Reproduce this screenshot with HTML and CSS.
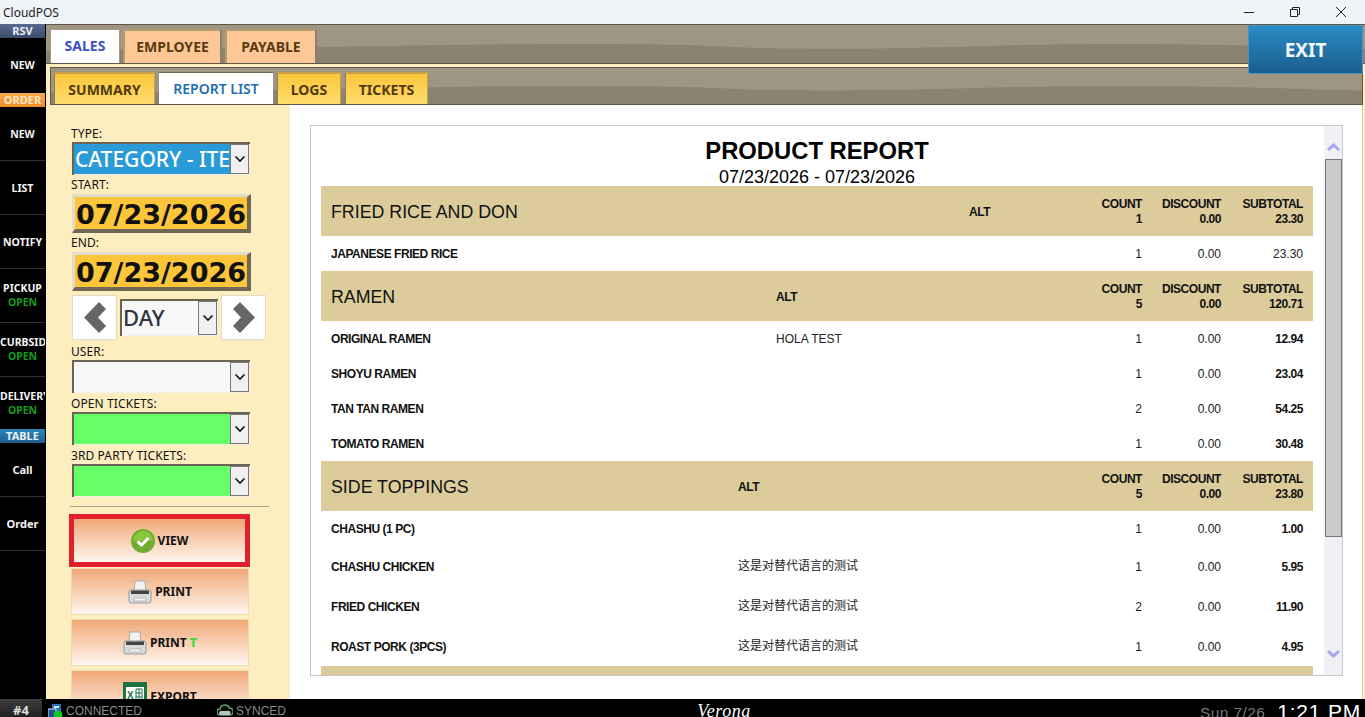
FILE: index.html
```html
<!DOCTYPE html>
<html>
<head>
    <title>CloudPOS</title>
    <link rel="stylesheet" href="styles.css">
</head>
<body>
    <div class="titlebar">
        <span class="app-name">CloudPOS</span>
        <div class="window-buttons">
            <svg width="12" height="12" viewBox="0 0 12 12"><path d="M1 6.500h10" stroke="#222" fill="none"/></svg>
            <svg width="12" height="12" viewBox="0 0 12 12"><path d="M1.500 3.500h7v7h-7zM3.500 3.500v-2h7v7h-2" stroke="#222" fill="none"/></svg>
            <svg width="12" height="12" viewBox="0 0 12 12"><path d="M1 1l10 10M11 1L1 11" stroke="#222" fill="none"/></svg>
        </div>
    </div>

    <div class="app">
        <div class="sidebar">
            <div class="side-head rsv">RSV</div>
            <div class="side-item first">NEW</div>
            <div class="side-head order">ORDER</div>
            <div class="side-item">NEW</div>
            <div class="side-item">LIST</div>
            <div class="side-item">NOTIFY</div>
            <div class="side-item">PICKUP<span class="open">OPEN</span></div>
            <div class="side-item">CURBSIDE<span class="open">OPEN</span></div>
            <div class="side-item last">DELIVERY<span class="open">OPEN</span></div>
            <div class="side-head table">TABLE</div>
            <div class="side-item plain">Call</div>
            <div class="side-item plain">Order</div>
        </div>

        <div class="main">
            <div class="band top-band">
                <svg class="wave" viewBox="0 0 1000 40" preserveAspectRatio="none"><path d="M0 27C120 27 280 20 405 20S500 25 590 25 720 20 815 20 950 24 1000 25V40H0z" fill="#8b8371"/></svg>
                <div class="tab active sales">SALES</div>
                <div class="tab peach">EMPLOYEE</div>
                <div class="tab peach">PAYABLE</div>
            </div>
            <div class="band sub-band">
                <svg class="wave" viewBox="0 0 1000 40" preserveAspectRatio="none"><path d="M0 27C120 27 280 20 405 20S500 25 590 25 720 20 815 20 950 24 1000 25V40H0z" fill="#8b8371"/></svg>
                <div class="tab yellow summary">SUMMARY</div>
                <div class="tab active reports">REPORT LIST</div>
                <div class="tab yellow logs">LOGS</div>
                <div class="tab yellow tickets">TICKETS</div>
            </div>

            <div class="content">
                <div class="filters">
                    <label class="first">TYPE:</label>
                    <div class="combo type-combo">
                        <div class="combo-value selected">CATEGORY - ITEM</div>
                        <div class="combo-arrow"><svg width="12" height="8" viewBox="0 0 12 8"><path d="M1.500 1.500L6 6l4.500-4.500" stroke="#111" stroke-width="1.600" fill="none"/></svg></div>
                    </div>
                    <label>START:</label>
                    <div class="date-box">07/23/2026</div>
                    <label>END:</label>
                    <div class="date-box">07/23/2026</div>
                    <div class="day-nav">
                        <div class="nav-btn"><svg width="22" height="31" viewBox="0 0 22 31"><polygon points="0,15.500 15,0 22,7 14,15.500 22,24 15,31" fill="#666"/></svg></div>
                        <div class="combo day-combo">
                            <div class="combo-value">DAY</div>
                            <div class="combo-arrow"><svg width="12" height="8" viewBox="0 0 12 8"><path d="M1.500 1.500L6 6l4.500-4.500" stroke="#111" stroke-width="1.600" fill="none"/></svg></div>
                        </div>
                        <div class="nav-btn"><svg width="22" height="31" viewBox="0 0 22 31"><polygon points="22,15.500 7,0 0,7 8,15.500 0,24 7,31" fill="#666"/></svg></div>
                    </div>
                    <label class="after-nav">USER:</label>
                    <div class="combo">
                        <div class="combo-value"></div>
                        <div class="combo-arrow"><svg width="12" height="8" viewBox="0 0 12 8"><path d="M1.500 1.500L6 6l4.500-4.500" stroke="#111" stroke-width="1.600" fill="none"/></svg></div>
                    </div>
                    <label class="after-combo">OPEN TICKETS:</label>
                    <div class="combo">
                        <div class="combo-value green"></div>
                        <div class="combo-arrow"><svg width="12" height="8" viewBox="0 0 12 8"><path d="M1.500 1.500L6 6l4.500-4.500" stroke="#111" stroke-width="1.600" fill="none"/></svg></div>
                    </div>
                    <label class="after-combo">3RD PARTY TICKETS:</label>
                    <div class="combo">
                        <div class="combo-value green"></div>
                        <div class="combo-arrow"><svg width="12" height="8" viewBox="0 0 12 8"><path d="M1.500 1.500L6 6l4.500-4.500" stroke="#111" stroke-width="1.600" fill="none"/></svg></div>
                    </div>
                    <div class="divider"></div>

                    <div class="action view">
                        <svg width="24" height="24" viewBox="0 0 24 24"><circle cx="12" cy="12" r="12" fill="#6fae2e"/><path d="M2 12a10 10 0 0 1 20 0z" fill="#8cc63f"/><path d="M6.500 12.500l4 3.500 7-7" stroke="#fff" stroke-width="3" fill="none"/></svg>
                        <span>VIEW</span>
                    </div>
                    <div class="action">
                        <svg width="24" height="24" viewBox="0 0 24 24"><path d="M7 1h10l1 10H6z" fill="#f2f2f2" stroke="#aaa"/><path d="M3 10h18a2 2 0 0 1 2 2v9a2 2 0 0 1-2 2H3a2 2 0 0 1-2-2v-9a2 2 0 0 1 2-2z" fill="#d8dadc" stroke="#999"/><path d="M3 10.500h18v3.500H3z" fill="#444"/><path d="M6 18h12v3H6z" fill="#f4f4f4" stroke="#bbb"/></svg>
                        <span>PRINT</span>
                    </div>
                    <div class="action">
                        <svg width="24" height="24" viewBox="0 0 24 24"><path d="M7 1h10l1 10H6z" fill="#f2f2f2" stroke="#aaa"/><path d="M3 10h18a2 2 0 0 1 2 2v9a2 2 0 0 1-2 2H3a2 2 0 0 1-2-2v-9a2 2 0 0 1 2-2z" fill="#d8dadc" stroke="#999"/><path d="M3 10.500h18v3.500H3z" fill="#444"/><path d="M6 18h12v3H6z" fill="#f4f4f4" stroke="#bbb"/></svg>
                        <span>PRINT <b class="green-t">T</b></span>
                    </div>
                    <div class="action export">
                        <svg width="24" height="24" viewBox="0 0 24 24"><path d="M0 0h24v24H0z" fill="#1f7244"/><path d="M3 5h18v16H3z" fill="#fff"/><path d="M13 7h6v12h-6zM13 11h6M13 15h6M16 7v12" stroke="#1f7244" fill="none"/><text x="4" y="17" font-size="10" font-family="Liberation Sans, sans-serif" font-weight="700" fill="#1f7244">X</text></svg>
                        <span>EXPORT</span>
                    </div>
                </div>

                <div class="report-area">
                    <div class="report-frame">
                        <div class="report">
                            <div class="report-title">PRODUCT REPORT</div>
                            <div class="report-dates">07/23/2026 - 07/23/2026</div>

                            <div class="group rice">
                                <div class="line head"><span class="cat">FRIED RICE AND DON</span><b>ALT</b><b class="num">COUNT<br>1</b><b class="num">DISCOUNT<br>0.00</b><b class="num">SUBTOTAL<br>23.30</b></div>
                                <div class="line"><b>JAPANESE FRIED RICE</b><span></span><span class="num">1</span><span class="num">0.00</span><span class="num">23.30</span></div>
                            </div>

                            <div class="group ramen">
                                <div class="line head"><span class="cat">RAMEN</span><b>ALT</b><b class="num">COUNT<br>5</b><b class="num">DISCOUNT<br>0.00</b><b class="num">SUBTOTAL<br>120.71</b></div>
                                <div class="line"><b>ORIGINAL RAMEN</b><span>HOLA TEST</span><span class="num">1</span><span class="num">0.00</span><b class="num">12.94</b></div>
                                <div class="line"><b>SHOYU RAMEN</b><span></span><span class="num">1</span><span class="num">0.00</span><b class="num">23.04</b></div>
                                <div class="line"><b>TAN TAN RAMEN</b><span></span><span class="num">2</span><span class="num">0.00</span><b class="num">54.25</b></div>
                                <div class="line"><b>TOMATO RAMEN</b><span></span><span class="num">1</span><span class="num">0.00</span><b class="num">30.48</b></div>
                            </div>

                            <div class="group sides">
                                <div class="line head"><span class="cat">SIDE TOPPINGS</span><b>ALT</b><b class="num">COUNT<br>5</b><b class="num">DISCOUNT<br>0.00</b><b class="num">SUBTOTAL<br>23.80</b></div>
                                <div class="line"><b>CHASHU (1 PC)</b><span></span><span class="num">1</span><span class="num">0.00</span><b class="num">1.00</b></div>
                                <div class="line tall"><b>CHASHU CHICKEN</b><span class="cjk">这是对替代语言的测试</span><span class="num">1</span><span class="num">0.00</span><b class="num">5.95</b></div>
                                <div class="line tall"><b>FRIED CHICKEN</b><span class="cjk">这是对替代语言的测试</span><span class="num">2</span><span class="num">0.00</span><b class="num">11.90</b></div>
                                <div class="line tall"><b>ROAST PORK (3PCS)</b><span class="cjk">这是对替代语言的测试</span><span class="num">1</span><span class="num">0.00</span><b class="num">4.95</b></div>
                            </div>

                            <div class="group"><div class="line head"></div></div>
                        </div>
                        <div class="scrollbar">
                            <svg width="17" height="12" viewBox="0 0 17 12"><path d="M3 9l5.500-5L14 9" stroke="#a5a5f0" stroke-width="3" fill="none"/></svg>
                            <div class="thumb"></div>
                            <svg class="down" width="17" height="12" viewBox="0 0 17 12"><path d="M3 3l5.500 5L14 3" stroke="#a5a5f0" stroke-width="3" fill="none"/></svg>
                        </div>
                    </div>
                </div>
            </div>
        </div>

        <div class="exit-btn">EXIT</div>
    </div>

    <div class="footer">
        <div class="station">#4</div>
        <div class="status connected">
            <svg width="15" height="15" viewBox="0 0 15 15"><path d="M4 0h9v9H4z" fill="#2a6fc0"/><path d="M6 2h5v2H6z" fill="#cfe3f7"/><path d="M0 5h8v9H0z" fill="#1d4f96" stroke="#cfe3f7"/><circle cx="10" cy="11" r="4.500" fill="#12c71e"/></svg>
            <span>CONNECTED</span>
        </div>
        <div class="status synced">
            <svg width="16" height="12" viewBox="0 0 16 12"><path d="M3 11a3 3 0 0 1 0-6 5 5 0 0 1 9.500-1 3.500 3.500 0 0 1 .5 7z" fill="#0f0f0f" stroke="#5c9a6a" stroke-width="1.500"/><path d="M3 11a2.500 2.500 0 0 1 .5-4h9a2.500 2.500 0 0 1 0 4z" fill="#b9c6bb"/></svg>
            <span>SYNCED</span>
        </div>
        <div class="store">Verona</div>
        <div class="clock">
            <span class="date">Sun 7/26</span>
            <span class="time">1:21 PM</span>
        </div>
    </div>
</body>
</html>
```

FILE: styles.css
```css
html, body {
    margin: 0;
    height: 717px;
    overflow: hidden;
}

body {
    font-family: "Noto Sans", "Open Sans", sans-serif;
    background: #000;
    display: flex;
    flex-direction: column;
}

.titlebar {
    height: 24px;
    flex: none;
    background: #eff4f9;
    display: flex;
    align-items: center;
    justify-content: space-between;
    font-size: 12px;
    color: #222;
    padding-left: 3px;
}

.window-buttons {
    display: flex;
    gap: 34px;
    padding-right: 18px;
}

.window-buttons svg {
    display: block;
}

.app {
    position: relative;
    height: 675px;
    flex: none;
    display: flex;
}

/* left black column */
.sidebar {
    width: 45px;
    flex: none;
    background: #000;
    color: #f4f4f4;
    font-size: 10.5px;
    font-weight: 700;
    overflow: hidden;
}

.side-head {
    height: 14px;
    line-height: 14px;
    text-align: center;
    font-size: 11px;
}

.side-head.rsv {
    background: linear-gradient(#56698f, #3d4c6d);
    color: #e8edf5;
}

.side-head.order {
    background: linear-gradient(#f9a94f, #f08b26);
    color: #ffe8c8;
}

.side-head.table {
    background: linear-gradient(#2c86bb, #1f5f8c);
    color: #e6f2fa;
}

.side-item {
    height: 54px;
    box-sizing: border-box;
    border-bottom: 1px solid #333;
    text-align: center;
    white-space: nowrap;
    overflow: hidden;
    padding-top: 20px;
    line-height: 14px;
}

.side-item.first {
    height: 55px;
    border-bottom: 0;
}

.side-item.last {
    height: 52px;
    border-bottom: 0;
}

.side-item.plain {
    font-size: 11px;
}

.side-item .open {
    display: block;
    color: #0f9d1c;
}

.side-item:has(.open) {
    padding-top: 12px;
}

.main {
    flex: 1;
    min-width: 0;
    margin-left: 1px;
    background: #fdeec0;
    display: flex;
    flex-direction: column;
    padding-right: 2px;
}

/* brown header bands behind the tabs */
.band {
    position: relative;
    display: flex;
    align-items: flex-end;
    background: #9e9583;
    overflow: hidden;
    box-sizing: border-box;
}

.wave {
    position: absolute;
    left: 0;
    top: 0;
    width: 100%;
    height: 100%;
}

.top-band {
    height: 40px;
    flex: none;
    border-top: 1px solid #5d5748;
    border-bottom: 1px solid #5d5748;
    padding-left: 4px;
    gap: 3px;
    margin-right: -2px;
}

.sub-band {
    height: 38px;
    flex: none;
    margin: 3px 0 0 4px;
    border: 1px solid #5d5748;
    padding-left: 3px;
    gap: 4px;
}

.tab {
    position: relative;
    box-sizing: border-box;
    font-size: 14px;
    font-weight: 700;
    text-align: center;
    height: 34px;
    line-height: 32px;
}

.tab.sales {
    width: 70px;
    color: #3f51c4;
    background: #fff;
    border: 1px solid #a59b88;
    border-bottom: 0;
}

.tab.peach {
    background: #fec896;
    color: #5a3a12;
    border-left: 2px solid #b39a70;
    border-top: 2px solid #b39a70;
    border-right: 2px solid #8d7f66;
    width: 99px;
}

.tab.peach + .tab.peach {
    width: 92px;
}

.sub-band .tab {
    height: 32px;
    line-height: 31px;
    width: 101px;
}

.tab.yellow {
    background: linear-gradient(#fcc63c, #fedc6c);
    color: #53390f;
    border-top: 2px solid #c9a24a;
    border-left: 1px solid #8d7f66;
    border-right: 1px solid #c9a24a;
}

.tab.reports {
    background: #fff;
    color: #1f6fb0;
    width: 114px;
    font-weight: 600;
    border-top: 1px solid #6f6654;
}

.tab.logs {
    width: 64px;
}

.tab.tickets {
    width: 83px;
}

.content {
    flex: 1;
    min-height: 0;
    display: flex;
    margin-left: 4px;
}

/* report filters on the left */
.filters {
    width: 240px;
    flex: none;
    box-sizing: border-box;
    padding: 22px 0 0 22px;
    border-right: 1px solid #efe6cc;
    overflow: hidden;
    display: flex;
    flex-direction: column;
    align-items: flex-start;
}

.filters label {
    display: block;
    flex: none;
    height: 15px;
    line-height: 14px;
    font-size: 12px;
    letter-spacing: 0.1px;
    margin: 3px 0 1px -1px;
    color: #111;
}

.filters label.first {
    margin: 0 0 0 -1px;
}

.filters label.after-nav {
    margin: 5px 0 0 -1px;
}

.filters label.after-combo {
    margin: 4px 0 0 -1px;
}

.combo {
    width: 178px;
    height: 33px;
    flex: none;
    box-sizing: border-box;
    display: flex;
    border-top: 2px solid #6b6455;
    border-left: 2px solid #6b6455;
    background: #f3f0ea;
    padding: 0 1px 1px 0;
}

.combo-value {
    flex: 1;
    min-width: 0;
    background: #f7f7f7;
    font-size: 21px;
    line-height: 30px;
    white-space: nowrap;
    overflow: hidden;
    color: #333;
    padding-left: 1px;
}

.combo-value.selected {
    background: #2a9bd8;
    color: #fff;
    font-weight: 500;
}

.combo-value.green {
    background: #66ff66;
}

.combo-arrow {
    width: 17px;
    flex: none;
    background: #f0f0f0;
    border: 1px solid #777;
    display: flex;
    align-items: center;
    justify-content: center;
}

.date-box {
    width: 179px;
    height: 39px;
    flex: none;
    box-sizing: border-box;
    background: #fcc53a;
    border-top: 3px solid #e3dcc8;
    border-left: 3px solid #e3dcc8;
    border-right: 4px solid #6f6654;
    border-bottom: 4px solid #6f6654;
    font-family: "DejaVu Sans", sans-serif;
    font-weight: 700;
    font-size: 27px;
    line-height: 35px;
    color: #111;
    white-space: nowrap;
    padding-left: 1px;
    overflow: hidden;
}

.day-nav {
    display: flex;
    flex: none;
    align-items: center;
    gap: 3px;
    margin-top: 4px;
}

.nav-btn {
    width: 45px;
    height: 45px;
    box-sizing: border-box;
    background: #fff;
    border: 1px solid #e3dcc8;
    display: flex;
    align-items: center;
    justify-content: center;
}

.day-combo {
    width: 98px;
    height: 37px;
}

.day-combo .combo-value {
    line-height: 32px;
    font-size: 22px;
    font-weight: 500;
    color: #2f3440;
}

.divider {
    width: 199px;
    height: 1px;
    flex: none;
    background: #a8a290;
    margin: 9px 0 0 -2px;
}

.action {
    width: 178px;
    height: 47px;
    flex: none;
    box-sizing: border-box;
    background: linear-gradient(#f0a877, #fff6ef);
    border: 1px solid #ecdcb8;
    margin: 4px 0 0 -1px;
    display: flex;
    align-items: center;
    justify-content: center;
    gap: 3px;
    font-size: 12px;
    font-weight: 700;
    color: #111;
}

.action.view {
    position: relative;
    width: 181px;
    height: 53px;
    border: 5px solid #e0202a;
    margin: 7px 0 -3px -3px;
}

.green-t {
    color: #3ede3e;
}

.action.export {
    align-items: flex-start;
    padding-top: 11px;
}

.action.export span {
    padding-top: 6px;
}

/* report area */
.report-area {
    flex: 1;
    min-width: 0;
    background: #fff;
    padding: 20px 19px 23px 20px;
    border-right: 1px solid #d8cfae;
}

.report-frame {
    height: 100%;
    box-sizing: border-box;
    border: 1px solid #c8c8c8;
    display: flex;
    justify-content: space-between;
    overflow: hidden;
}

.report {
    width: 992px;
    margin-left: 10px;
    flex: none;
    font-family: "Liberation Sans", Arial, sans-serif;
    font-size: 12px;
    color: #222;
}

.report-title {
    font-size: 23.800px;
    font-weight: 700;
    color: #000;
    text-align: center;
    padding-top: 11px;
    line-height: 28px;
}

.report-dates {
    font-size: 18px;
    text-align: center;
    color: #000;
    line-height: 24px;
    height: 21px;
}

.group {
    --name-col: 400px;
}

.group.rice {
    --name-col: 638px;
}

.group.ramen {
    --name-col: 445px;
}

.group.sides {
    --name-col: 407px;
}

.line {
    display: grid;
    grid-template-columns: var(--name-col) 1fr 60px 79px 82px;
    align-items: center;
    height: 35px;
    box-sizing: border-box;
    padding: 0 10px;
}

.line.tall {
    height: 40px;
    padding-top: 2px;
}

.line.head {
    height: 50px;
    padding-top: 2px;
    background: #dccc9c;
    line-height: 15px;
}

.line b {
    color: #111;
    letter-spacing: -0.45px;
}

.cat {
    font-size: 17.800px;
    color: #111;
}

.num {
    text-align: right;
}

.cjk {
    font-family: "Noto Sans CJK SC", sans-serif;
    line-height: 15px;
    margin-bottom: 6px;
}

.scrollbar {
    position: relative;
    width: 17px;
    flex: none;
    background: #f0f0f5;
    border-left: 1px solid #f0f0f5;
}

.scrollbar svg {
    position: absolute;
    left: 0;
    top: 15px;
}

.scrollbar svg.down {
    top: auto;
    bottom: 15px;
}

.thumb {
    position: absolute;
    top: 33px;
    left: 0;
    width: 17px;
    height: 378px;
    box-sizing: border-box;
    background: #cbcbcb;
    border: 1px solid #777;
}

.exit-btn {
    position: absolute;
    top: 1px;
    right: 2px;
    width: 115px;
    height: 49px;
    box-sizing: border-box;
    border: 1px solid #4a94c4;
    background: linear-gradient(#2b8bc4, #1c5d8e);
    color: #f2f8fc;
    font-size: 19px;
    font-weight: 700;
    text-align: center;
    line-height: 49px;
}

/* bottom status bar */
.footer {
    height: 18px;
    flex: none;
    display: flex;
    align-items: flex-start;
    background: #000;
    color: #8a8a8a;
    font-family: "Liberation Sans", Arial, sans-serif;
    font-size: 12px;
    position: relative;
    overflow: hidden;
}

.station {
    width: 42px;
    height: 18px;
    background: linear-gradient(#3c3c3c, #222);
    color: #ddd;
    font-weight: 700;
    font-size: 13px;
    text-align: center;
    line-height: 22px;
    font-family: "Noto Sans", sans-serif;
}

.status {
    display: flex;
    align-items: flex-start;
    gap: 3px;
    line-height: 24px;
    height: 18px;
}

.status svg {
    margin-top: 5px;
    flex: none;
}

.status.connected {
    width: 169px;
    margin-left: 6px;
}

.store {
    position: absolute;
    left: 0;
    right: 0;
    top: 2px;
    text-align: center;
    padding-left: 83px;
    font-family: "Liberation Serif", serif;
    font-style: italic;
    font-size: 18px;
    line-height: 20px;
    letter-spacing: 0.5px;
    color: #fff;
}

.clock {
    margin-left: auto;
    display: flex;
    align-items: flex-start;
    gap: 12px;
    padding-right: 4px;
}

.clock .date {
    font-size: 15.500px;
    line-height: 28px;
    color: #777;
    letter-spacing: 0.4px;
}

.clock .time {
    font-size: 21px;
    line-height: 26px;
    color: #fff;
    letter-spacing: 0.8px;
}
```
